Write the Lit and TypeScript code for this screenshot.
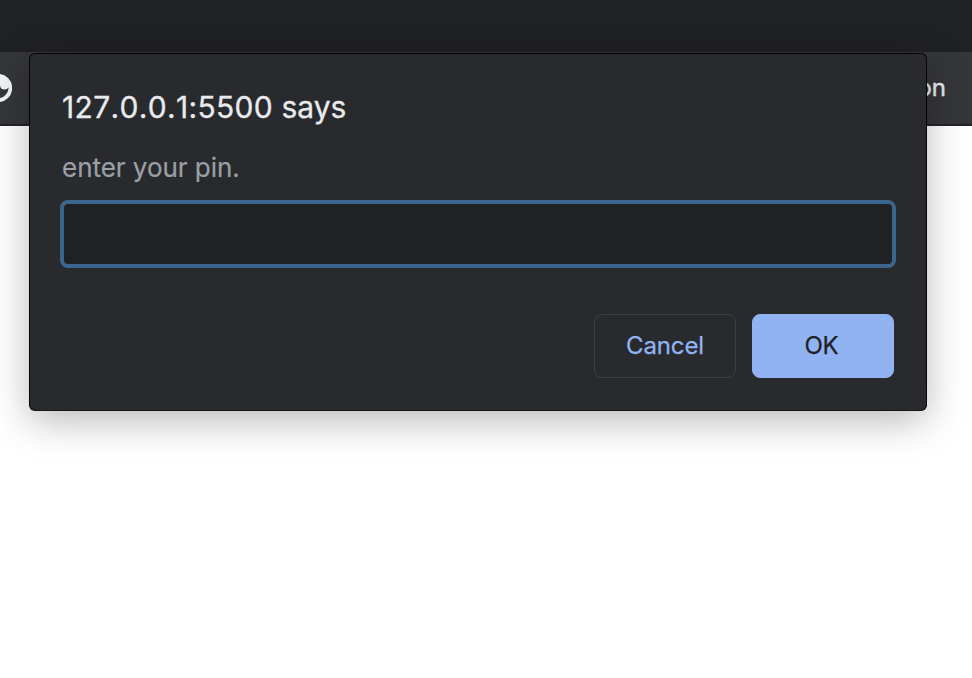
import { LitElement, html, css } from "lit";
import { customElement } from "lit/decorators.js";

@customElement("prompt-dialog")
class PromptDialog extends LitElement {
  static styles = css`
    :host {
      display: flex;
      flex-direction: column;
      box-sizing: border-box;
      width: 898px;
      height: 358px;
      padding: 0 32px 32px 30px;
      border: 1px solid #050506;
      border-bottom-color: #151618;
      border-radius: 6px;
      background: #292a2d;
      box-shadow: 0 10px 38px rgba(0, 0, 0, 0.28);
    }
    .title, .message { white-space: nowrap; margin: 0 0 0 2px; font-weight: 400; }
    .title { margin-top: 33px; font-size: 30px; line-height: 40px; color: #e8eaed; -webkit-text-stroke: 0.3px #e8eaed; }
    .host { font-kerning: none; letter-spacing: 0.33px; }
    .message { margin-top: 24px; font-size: 26px; line-height: 34px; letter-spacing: -0.03px; color: #9aa0a6; -webkit-text-stroke: 0.2px #9aa0a6; }
    .field {
      box-sizing: border-box;
      width: 836px;
      height: 68px;
      margin: 15px 0 0;
      padding: 0 12px;
      border: 4px solid #3b658c;
      border-radius: 8px;
      background: #202124;
      color: #e8eaed;
      font: inherit;
      outline: none;
    }
    .actions { display: flex; justify-content: flex-end; gap: 16px; margin-top: auto; }
    button {
      box-sizing: border-box;
      width: 142px;
      height: 64px;
      padding: 0;
      border: 1px solid #3c4043;
      border-radius: 8px;
      background: transparent;
      color: #91b3f2;
      font: 24px/62px Inter, sans-serif;
      letter-spacing: -0.15px;
      -webkit-text-stroke: 0.25px currentColor;
    }
    .ok { padding-right: 3px; border-color: #91b3f2; background: #91b3f2; color: #202124; }
  `;
  render() {
    return html`
      <h1 class="title"><span class="host">127.0.0.1:5500</span> says</h1>
      <p class="message">enter your pin.</p>
      <input class="field" type="text" aria-label="pin" />
      <div class="actions">
        <button class="cancel">Cancel</button>
        <button class="ok">OK</button>
      </div>
    `;
  }
}

@customElement("app-root")
class AppRoot extends LitElement {
  static styles = css`
    :host {
      display: block;
      position: relative;
      width: 972px;
      height: 678px;
      overflow: hidden;
      background: #fff;
      font-family: Inter, sans-serif;
    }
    .tabs { height: 52px; background: #202124; }
    .bookmarks {
      display: flex;
      align-items: center;
      justify-content: space-between;
      box-sizing: border-box;
      height: 74px;
      padding-right: 26px;
      border-bottom: 2px solid #242424;
      background: #35363a;
      color: #e8eaed;
      font-size: 24px;
    }
    .globe { display: block; }
    .label { margin-top: -2px; -webkit-text-stroke: 0.4px #e8eaed; }
    prompt-dialog { position: absolute; left: 29px; top: 53px; }
  `;
  render() {
    return html`
      <div class="tabs"></div>
      <div class="bookmarks">
        <svg class="globe" width="12" height="30" viewBox="0 0 12 30">
          <circle cx="-2" cy="15" r="14.200" fill="#f1f3f4" />
          <path d="M0 12.500C0.500 15.500 2 16.500 4.500 16.500C6.500 16.500 7.500 15.500 8.600 14.500C8.500 19.500 5 24 0 25Z" fill="#35363a" />
        </svg>
        <span class="label">on</span>
      </div>
      <prompt-dialog></prompt-dialog>
    `;
  }
}
